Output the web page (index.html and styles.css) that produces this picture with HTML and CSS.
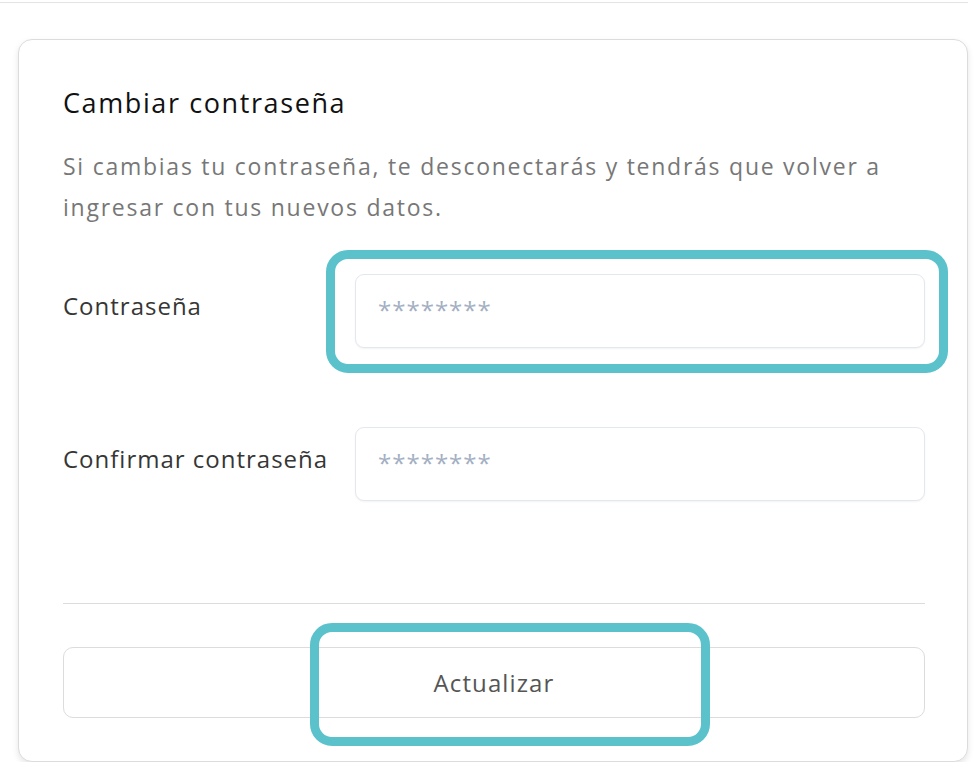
FILE: index.html
```html
<!DOCTYPE html>
<html lang="es">
<head>
<meta charset="utf-8">
<title>Cambiar contraseña</title>
<link rel="stylesheet" href="styles.css">
</head>
<body>
<div class="topbar"></div>
<section class="card">
  <h2 class="title">Cambiar contraseña</h2>
  <p class="desc">Si cambias tu contraseña, te desconectarás y tendrás que volver a ingresar con tus nuevos datos.</p>
  <div class="row row-first">
    <label class="label" for="pw">Contraseña</label>
    <input class="field" id="pw" type="password" placeholder="********">
  </div>
  <div class="row row-second">
    <label class="label" for="pw2">Confirmar contraseña</label>
    <input class="field" id="pw2" type="password" placeholder="********">
  </div>
  <hr class="divider">
  <button class="btn" type="button">Actualizar</button>
  <div class="mark mark-input"></div>
  <div class="mark mark-btn"></div>
</section>
</body>
</html>
```

FILE: styles.css
```css
* { box-sizing: border-box; }
html, body { margin: 0; padding: 0; background: #fff; }
body { font-family: "Open Sans", "Liberation Sans", sans-serif; }

.topbar {
  width: 968px;
  height: 3px;
  border-bottom: 1px solid #e3e3e3;
}

.card {
  position: relative;
  width: 950px;
  margin: 36px 0 0 18px;
  padding: 47px 42px 43px 44px;
  border: 1px solid #dcdcdc;
  border-radius: 14px;
  background: #fff;
  box-shadow: 0 3px 6px rgba(0, 0, 0, 0.10);
}

.title {
  margin: 0;
  font-size: 27px;
  line-height: 32px;
  font-weight: 400;
  letter-spacing: 1.6px;
  color: #111;
}

.desc {
  margin: 27px 0 0;
  font-size: 23px;
  line-height: 41px;
  letter-spacing: 1.75px;
  color: #777;
}

.row {
  display: flex;
  align-items: flex-start;
}
.row-first { margin-top: 46px; }
.row-second { margin-top: 79px; }

.label {
  width: 292px;
  flex: none;
  margin-top: 17px;
  font-size: 24px;
  line-height: 30px;
  letter-spacing: 1px;
  color: #363636;
}

.field {
  flex: 1;
  height: 74px;
  padding: 0 22px 4px;
  border: 1px solid #e3e8ef;
  border-radius: 9px;
  background: #fff;
  box-shadow: 0 1px 2px rgba(0, 0, 0, 0.05);
  font-family: "Open Sans", "Liberation Sans", sans-serif;
  font-size: 24px;
  letter-spacing: 1px;
  color: #333;
  outline: none;
}
.field::placeholder { color: #a3afc2; }

.divider {
  margin: 102px 0 0;
  border: 0;
  border-top: 1px solid #dcdcdc;
}

.btn {
  display: block;
  width: 100%;
  height: 71px;
  margin-top: 43px;
  border: 1px solid #dcdcdc;
  border-radius: 10px;
  background: #fff;
  font-family: "Open Sans", "Liberation Sans", sans-serif;
  font-size: 24px;
  letter-spacing: 1.1px;
  color: #555;
}

.mark {
  position: absolute;
  border: 9px solid #5bc2cc;
  border-radius: 22px;
  pointer-events: none;
}
.mark-input { left: 307px; top: 210px; width: 622px; height: 123px; }
.mark-btn { left: 291px; top: 583px; width: 400px; height: 123px; }
```
